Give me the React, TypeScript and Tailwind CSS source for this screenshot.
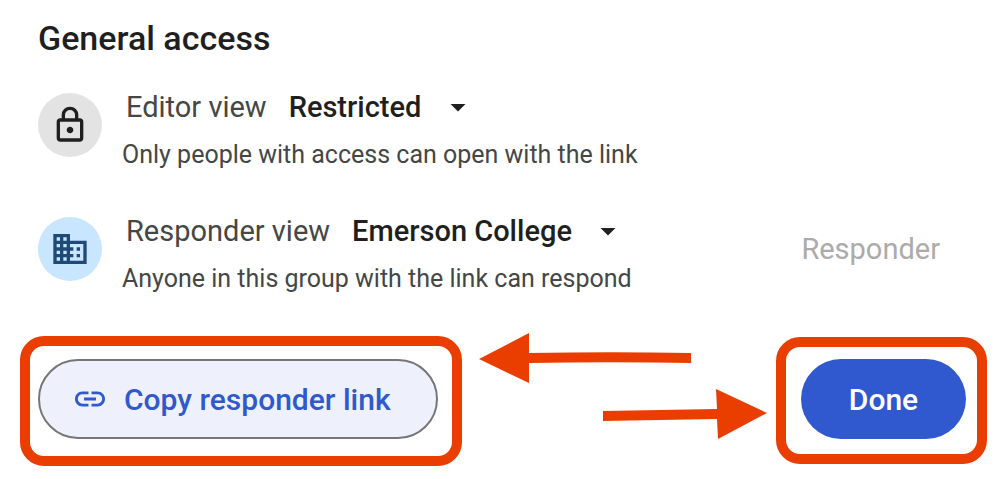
import type { ReactNode } from "react";

const LOCK_PATH =
  "M240-80q-33 0-56.5-23.5T160-160v-400q0-33 23.5-56.5T240-640h40v-80q0-83 58.5-141.5T480-920q83 0 141.5 58.5T680-720v80h40q33 0 56.5 23.5T800-560v400q0 33-23.5 56.5T720-80H240Zm0-80h480v-400H240v400Zm240-120q33 0 56.5-23.5T560-360q0-33-23.5-56.5T480-440q-33 0-56.5 23.5T400-360q0 33 23.5 56.5T480-280ZM360-640h240v-80q0-50-35-85t-85-35q-50 0-85 35t-35 85v80Z";
const BUILDING_PATH =
  "M12 7V3H2v18h20V7H12zM6 19H4v-2h2v2zm0-4H4v-2h2v2zm0-4H4V9h2v2zm0-4H4V5h2v2zm4 12H8v-2h2v2zm0-4H8v-2h2v2zm0-4H8V9h2v2zm0-4H8V5h2v2zm10 12h-8v-2h2v-2h-2v-2h2v-2h-2V9h8v10zm-2-8h-2v2h2v-2zm0 4h-2v2h2v-2z";
const LINK_PATH =
  "M3.9 12c0-1.71 1.39-3.1 3.1-3.1h4V7H7c-2.76 0-5 2.24-5 5s2.24 5 5 5h4v-1.9H7c-1.71 0-3.1-1.39-3.1-3.1zM8 13h8v-2H8v2zm9-6h-4v1.9h4c1.71 0 3.1 1.39 3.1 3.1s-1.39 3.1-3.1 3.1h-4V17h4c2.76 0 5-2.24 5-5s-2.24-5-5-5z";

type AccessRowProps = {
  id: string;
  icon: ReactNode;
  label: string;
  value: string;
  hint: string;
  role?: string;
};

function AccessRow({ id, icon, label, value, hint, role }: AccessRowProps) {
  return (
    <div className="flex items-start">
      {icon}
      <div className="ml-5 flex-1">
        <div className="-mt-1 flex items-center pl-1 text-[29px] leading-9">
          <label htmlFor={id} className="text-[#444746]">
            {label}
          </label>
          <div className="relative ml-[22px]">
            <select
              id={id}
              defaultValue={value}
              className="block appearance-none bg-transparent pr-15 font-medium text-[#1f1f1f]"
            >
              <option>{value}</option>
            </select>
            {/* caret over the select's right padding */}
            <svg
              viewBox="0 0 24 24"
              className="pointer-events-none absolute top-0 right-1.5 size-9 fill-[#1f1f1f]"
            >
              <path d="M7 10l5 5 5-5z" />
            </svg>
          </div>
        </div>
        <p className="mt-[14px] text-[25px] leading-8 text-[#444746]">{hint}</p>
      </div>
      {role && <span className="mt-4 mr-7 text-[29px] leading-8 text-[#ababab]">{role}</span>}
    </div>
  );
}

export default function App() {
  return (
    <main className="bg-white pt-[18px] pb-3 font-[Roboto,'Liberation_Sans',sans-serif]">
      <section className="px-[38px]">
        <h2 className="text-[34px] leading-10 font-medium text-[#1f1f1f]">General access</h2>
        <div className="mt-[35px] flex flex-col gap-[46px]">
          <AccessRow
            id="editor-view"
            label="Editor view"
            value="Restricted"
            hint="Only people with access can open with the link"
            icon={
              <div className="flex size-16 items-center justify-center rounded-full bg-[#e3e3e3]">
                <svg viewBox="0 -960 960 960" className="size-10 fill-[#1f1f1f]">
                  <path d={LOCK_PATH} />
                </svg>
              </div>
            }
          />
          <AccessRow
            id="responder-view"
            label="Responder view"
            value="Emerson College"
            hint="Anyone in this group with the link can respond"
            role="Responder"
            icon={
              <div className="flex size-16 items-center justify-center rounded-full bg-[#c8e6ff]">
                <svg viewBox="0 0 24 24" className="size-10 fill-[#1f4a77]">
                  <path d={BUILDING_PATH} />
                </svg>
              </div>
            }
          />
        </div>
      </section>

      <footer className="mt-[41px] flex items-start pr-[19px] pl-5">
        <div className="rounded-3xl border-10 border-[#ea3e00] pt-[13px] pr-[14px] pb-[17px] pl-2">
          <button
            type="button"
            className="flex h-20 w-[400px] items-center gap-4 rounded-full border-2 border-[#747775] bg-[#eef1fb] pl-8 text-[30px] font-medium text-[#3058cf]"
          >
            <svg viewBox="0 0 24 24" className="size-9 fill-[#3058cf]">
              <path d={LINK_PATH} />
            </svg>
            Copy responder link
          </button>
        </div>
        {/* arrows pointing at the two buttons */}
        <svg viewBox="0 0 314 130" className="h-[130px] min-w-0 flex-1 overflow-visible fill-[#ea3e00]">
          <path d="M17 23L67 -3V17Q150 15.500 229 17L229 27Q150 25.500 67 27V47Z" />
          <path d="M141 75L255 73L254 53L305 77L256 103L255 83L141 85Z" />
        </svg>
        <div className="mt-px rounded-3xl border-10 border-[#ea3e00] pt-3 pr-[11px] pb-[15px] pl-[15px]">
          <button
            type="button"
            className="h-20 w-[165px] rounded-full bg-[#3058cf] text-[30px] font-medium text-white"
          >
            Done
          </button>
        </div>
      </footer>
    </main>
  );
}
